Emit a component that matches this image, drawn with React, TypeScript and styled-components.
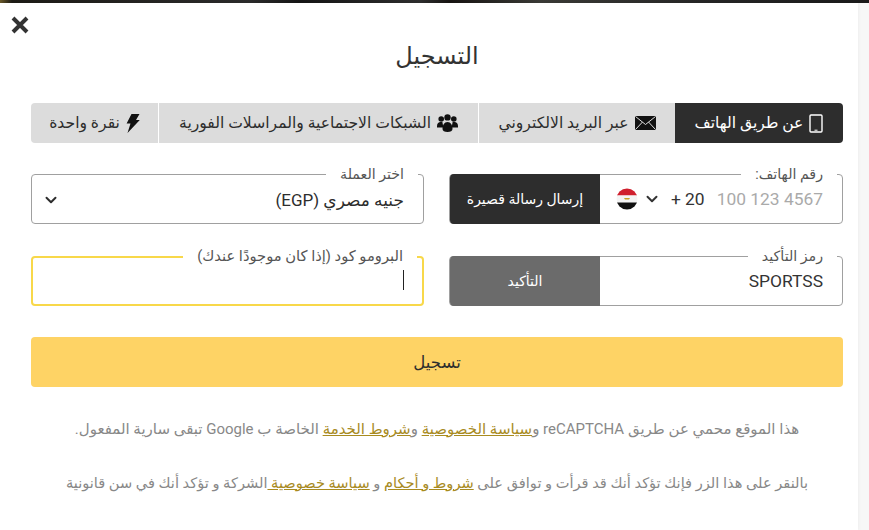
import React from 'react';
import styled, { createGlobalStyle } from 'styled-components';
import { ChevronDown } from 'lucide-react';

const GlobalStyle = createGlobalStyle`
  html, body {
    margin: 0;
    padding: 0;
    background: #f7f7f7;
    overflow: hidden;
  }
  * {
    box-sizing: border-box;
  }
`;

const Page = styled.div`
  width: 869px;
  height: 530px;
  direction: rtl;
  font-family: Roboto, "DejaVu Sans", sans-serif;
  color: #2d2d2d;
`;

const TopStrip = styled.div`
  height: 3px;
  background: linear-gradient(
    to right,
    #6b5a2a 0,
    #1d1b16 12px,
    #2b2b2b 250px,
    #151515 300px,
    #2e2e2e 420px,
    #171412 450px,
    #3a3a36 540px,
    #262626 700px,
    #1a1a1a 869px
  );
`;

const Modal = styled.div`
  position: relative;
  width: 858px;
  height: 527px;
  background: #fff;
  padding: 0 15px 0 31px;
  margin-right: 11px;
  box-shadow: 1px 0 3px rgba(0, 0, 0, 0.04);
`;

const Close = styled.button`
  position: absolute;
  left: 10px;
  top: 12px;
  width: 20px;
  height: 20px;
  padding: 0;
  border: 0;
  background: none;
  color: #333;
`;

const Title = styled.h1`
  margin: 0;
  padding-top: 36px;
  height: 100px;
  font-size: 24px;
  line-height: 34px;
  font-weight: 400;
  text-align: center;
  color: #333;
`;

const Tabs = styled.div`
  display: flex;
  height: 40px;
  border-radius: 4px;
  overflow: hidden;
`;

const Tab = styled.div<{ $active?: boolean; $width: number }>`
  width: ${p => p.$width}px;
  display: flex;
  align-items: center;
  justify-content: center;
  gap: 6px;
  font-size: 15.6px;
  background: ${p => (p.$active ? '#2d2d2d' : '#dcdcdc')};
  color: ${p => (p.$active ? '#fff' : '#2d2d2d')};
  border-left: ${p => (p.$active ? '0' : '1px solid #fff')};
  &:last-child {
    border-left: 0;
  }
`;

const FormGrid = styled.div`
  display: grid;
  grid-template-columns: 394px 393px;
  column-gap: 25px;
  row-gap: 32px;
  margin-top: 31px;
`;

const Field = styled.div<{ $focus?: boolean }>`
  position: relative;
  height: 50px;
  display: flex;
  align-items: stretch;
  border: ${p => (p.$focus ? '2px solid #f8d84a' : '1px solid #a0a0a0')};
  border-radius: 4px;
`;

const Legend = styled.label<{ $focus?: boolean }>`
  position: absolute;
  top: ${p => (p.$focus ? -10 : -9)}px;
  right: 5px;
  padding: 0 14px;
  background: #fff;
  font-size: ${p => (p.$focus ? 14.7 : 14.2)}px;
  line-height: 16px;
  color: #555;
`;

const InputPart = styled.div`
  flex: 1;
  min-width: 0;
  display: flex;
  align-items: center;
  padding: 0 19px 0 0;
  font-size: 17.4px;
  color: #333;
  white-space: nowrap;
`;

const Placeholder = styled.span`
  direction: ltr;
  color: #aaa;
`;

const Code = styled.span`
  direction: ltr;
  color: #333;
  margin-right: 12px;
`;

const FlagWrap = styled.span`
  display: flex;
  align-items: center;
  gap: 5px;
  margin-right: 10px;
  flex-shrink: 0;
`;

const Action = styled.div<{ $muted?: boolean }>`
  width: 150px;
  flex-shrink: 0;
  margin: -1px -1px -1px 0;
  display: flex;
  align-items: center;
  justify-content: center;
  font-size: 14px;
  color: #fff;
  background: ${p => (p.$muted ? '#6b6b6b' : '#2d2d2d')};
  border-radius: 4px 0 0 4px;
`;

const SelectPart = styled.div`
  flex: 1;
  display: flex;
  align-items: center;
  justify-content: space-between;
  padding: 2px 19px 0 10px;
  font-size: 17px;
`;

const Caret = styled.span`
  position: absolute;
  right: 18px;
  top: 12px;
  width: 1px;
  height: 20px;
  background: #222;
`;

const Submit = styled.button`
  display: block;
  width: 100%;
  height: 50px;
  margin-top: 31px;
  border: 0;
  border-radius: 4px;
  background: #fed365;
  color: #2d2d2d;
  font-family: inherit;
  font-size: 16.5px;
`;

const Note = styled.p<{ $top: number; $size: number }>`
  margin: ${p => p.$top}px 0 0;
  text-align: center;
  font-size: ${p => p.$size}px;
  line-height: 18px;
  color: #888;
  white-space: nowrap;
`;

const NoteLink = styled.a`
  color: #a88b1f;
  text-decoration: underline;
`;

const EgyptFlag = () => (
  <svg width="22" height="22" viewBox="0 0 22 22">
    <defs>
      <clipPath id="flag-circle">
        <circle cx="11" cy="11" r="10.5" />
      </clipPath>
    </defs>
    <g clipPath="url(#flag-circle)">
      <rect width="22" height="7.5" fill="#d0202e" />
      <rect y="7.5" width="22" height="7" fill="#f4f4f4" />
      <rect y="14.5" width="22" height="7.5" fill="#111" />
      <path d="M8 10h6l-1 1.6h-4z" fill="#c9a227" />
    </g>
  </svg>
);

const CloseIcon = () => (
  <svg width="20" height="20" viewBox="0 0 20 20">
    <path d="M3 3l14 14M17 3L3 17" stroke="currentColor" strokeWidth="4" />
  </svg>
);

const PhoneIcon = () => (
  <svg width="14" height="19" viewBox="0 0 14 19" fill="none">
    <rect x="1" y="1" width="12" height="17" rx="1" stroke="#fff" strokeWidth="1.4" />
    <path d="M5.5 16.2h3" stroke="#fff" strokeWidth="1" />
  </svg>
);

const MailIcon = () => (
  <svg width="21" height="14" viewBox="0 0 21 14">
    <rect width="21" height="14" rx="1" fill="#111" />
    <path d="M0.5 0.5l10 8 10-8M0.5 13.5l7-7.5M20.5 13.5l-7-7.5" stroke="#dcdcdc" strokeWidth="1" fill="none" />
  </svg>
);

const GroupIcon = () => (
  <svg width="21" height="18" viewBox="0 0 21 18" fill="#111">
    <circle cx="4.2" cy="5" r="2.8" />
    <circle cx="16.8" cy="5" r="2.8" />
    <circle cx="10.5" cy="3.4" r="3.2" />
    <path d="M0 12c0-2.6 1.6-4 3.6-4h1.8l1 5.5H0z" />
    <path d="M21 12c0-2.6-1.6-4-3.6-4h-1.8l-1 5.5H21z" />
    <path d="M5.5 15c0-4 1.8-7 5-7s5 3 5 7c0 1.8-2 3-5 3s-5-1.2-5-3z" />
  </svg>
);

const BoltIcon = () => (
  <svg width="14" height="19" viewBox="0 0 14 19" fill="#111">
    <path d="M5.5 0h8l-3.5 6h3.8L1.5 19l3-9.5H0.6z" />
  </svg>
);

export default function App() {
  return (
    <Page>
      <GlobalStyle />
      <TopStrip />
      <Modal>
        <Close aria-label="close">
          <CloseIcon />
        </Close>
        <Title>التسجيل</Title>
        <Tabs>
          <Tab $active $width={168}>
            <PhoneIcon />
            عن طريق الهاتف
          </Tab>
          <Tab $width={197}>
            <MailIcon />
            عبر البريد الالكتروني
          </Tab>
          <Tab $width={320}>
            <GroupIcon />
            الشبكات الاجتماعية والمراسلات الفورية
          </Tab>
          <Tab $width={127}>
            <BoltIcon />
            نقرة واحدة
          </Tab>
        </Tabs>
        <FormGrid>
          <Field>
            <Legend>رقم الهاتف:</Legend>
            <InputPart>
              <Placeholder>100 123 4567</Placeholder>
              <Code>+ 20</Code>
              <FlagWrap>
                <ChevronDown size={18} strokeWidth={2.6} />
                <EgyptFlag />
              </FlagWrap>
            </InputPart>
            <Action>إرسال رسالة قصيرة</Action>
          </Field>
          <Field>
            <Legend>اختر العملة</Legend>
            <SelectPart>
              <span>جنيه مصري (EGP)</span>
              <ChevronDown size={18} strokeWidth={2.6} />
            </SelectPart>
          </Field>
          <Field>
            <Legend>رمز التأكيد</Legend>
            <InputPart>SPORTSS</InputPart>
            <Action $muted>التأكيد</Action>
          </Field>
          <Field $focus>
            <Legend $focus>البرومو كود (إذا كان موجودًا عندك)</Legend>
            <Caret />
          </Field>
        </FormGrid>
        <Submit>تسجيل</Submit>
        <Note $top={33} $size={15}>
          هذا الموقع محمي عن طريق reCAPTCHA و<NoteLink>سياسة الخصوصية</NoteLink> و
          <NoteLink>شروط الخدمة</NoteLink> الخاصة ب Google تبقى سارية المفعول.
        </Note>
        <Note $top={36} $size={14.6}>
          بالنقر على هذا الزر فإنك تؤكد أنك قد قرأت و توافق على <NoteLink>شروط و أحكام</NoteLink> و{' '}
          <NoteLink>سياسة خصوصية </NoteLink>الشركة و تؤكد أنك في سن قانونية
        </Note>
      </Modal>
    </Page>
  );
}
